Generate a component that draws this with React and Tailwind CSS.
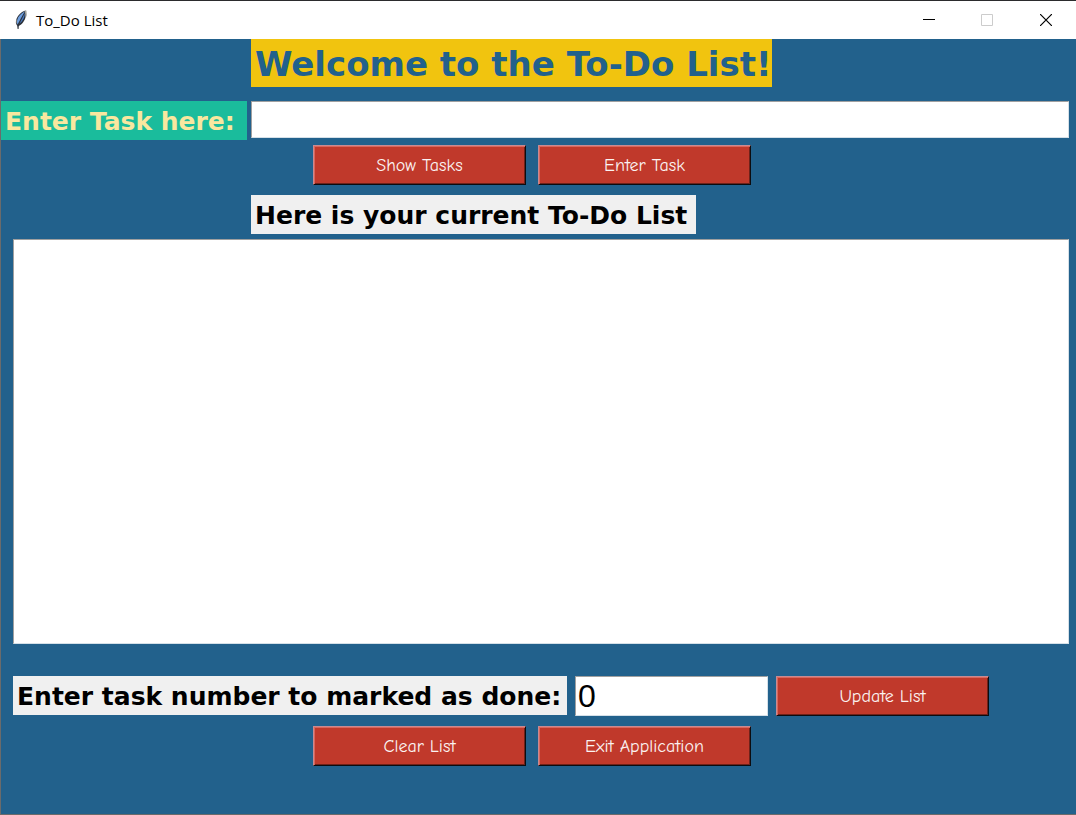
import { useState } from "react";

function FeatherIcon() {
  return (
    <svg width="14" height="20" viewBox="0 0 14 20" aria-hidden="true">
      <path d="M11.6 0.6 C7.5 1.6 3.4 5.6 2.2 10 C1.7 12.2 2 14.4 3.2 15.8 L3.6 19 L4.6 19 L4.8 16 C8 14.4 11 10.6 11.8 6.2 C12.2 4 12.2 2 11.6 0.6 Z" fill="#2b313b" />
      <path d="M10.8 1.6 C7.2 3 4.2 6.4 3.2 10 C2.8 11.8 2.9 13.2 3.6 14.6 L7.6 7 Z" fill="#6d9ddd" />
      <path d="M10.8 3 C11 7 9 11 5.4 13.8 L8.4 8 Z" fill="#4a7cc4" />
      <path d="M10.6 1 L12.4 .6 L12.8 5 L11.6 8.6 L11.2 4 Z" fill="#a3a29c" />
      <path d="M2 9.6 L2.8 9.4 L2.6 13.6 L1.8 13 Z" fill="#8c8a86" />
    </svg>
  );
}

function TitleBar() {
  return (
    <header className="flex h-[39px] items-center justify-between border-t border-[#2b2b2d] bg-white pl-[14px] text-black">
      <div className="flex items-center gap-2">
        <FeatherIcon />
        <span className="font-['Open_Sans','Noto_Sans',sans-serif] text-[15px] leading-5">To_Do List</span>
      </div>
      <div className="flex">
        <button type="button" aria-label="Minimize" className="flex h-[38px] w-[58px] items-center justify-center">
          <svg width="12" height="12" aria-hidden="true"><path d="M0 5.5H12" stroke="#000" /></svg>
        </button>
        <button type="button" aria-label="Maximize" disabled className="flex h-[38px] w-[58px] items-center justify-center">
          <svg width="12" height="12" aria-hidden="true"><path d="M.5 .5H11.5V11.5H.5Z" fill="none" stroke="#ccc" /></svg>
        </button>
        <button type="button" aria-label="Close" className="flex h-[38px] w-[60px] items-center justify-center">
          <svg width="12" height="12" aria-hidden="true"><path d="M0 0L12 12M12 0L0 12" stroke="#000" strokeWidth="1.2" /></svg>
        </button>
      </div>
    </header>
  );
}

function ActionButton({ children, onClick }) {
  return (
    <button
      type="button"
      onClick={onClick}
      className="h-10 w-[213px] shrink-0 border border-t-[#c98a92] border-r-[#0c0c10] border-b-[#0c0c10] border-l-[#c98a92] bg-[#c0392b] pt-px font-['Comic_Sans_MS','Comic_Neue','Open_Sans',sans-serif] text-[18px] leading-6 text-[#fbf3f2] shadow-[inset_1px_1px_0_#d9675c,inset_-1px_-1px_0_#6e221a]"
    >
      {children}
    </button>
  );
}

const field = "border border-t-[#a0a0a0] border-l-[#a0a0a0] border-r-[#d5e0e8] border-b-[#d5e0e8] bg-white text-black outline-none";
const caption = "h-[39px] shrink-0 px-1 text-[25px] leading-[42px] font-bold whitespace-nowrap";

export default function App() {
  const [task, setTask] = useState("");
  const [tasks, setTasks] = useState([]);
  const [list, setList] = useState("");
  const [number, setNumber] = useState("0");

  const show = (items) => setList(items.map((item, i) => `${i + 1}. ${item}`).join("\n"));
  const enter = () => {
    if (!task.trim()) return;
    setTasks([...tasks, task.trim()]);
    setTask("");
  };
  const update = () => {
    const rest = tasks.filter((_, i) => i + 1 !== Number(number));
    setTasks(rest);
    show(rest);
  };
  const clear = () => {
    setTasks([]);
    setList("");
  };

  return (
    <div className="flex min-h-screen flex-col font-['DejaVu_Sans',Verdana,sans-serif]">
      <TitleBar />
      <main className="flex flex-1 flex-col border-b border-l border-[#6b6b6b] bg-[#22618c] pr-[7px] pb-12">
        <h1 className="ml-[250px] h-12 w-[521px] bg-[#f1c40f] px-1 text-[34px] leading-[50px] font-bold whitespace-nowrap text-[#22618c]">
          Welcome to the To-Do List!
        </h1>
        <div className="mt-[14px] flex items-start gap-1">
          <label htmlFor="task" className={`${caption} w-[246px] bg-[#1abc9c] text-[#f9e79f]`}>Enter Task here:</label>
          <input id="task" value={task} onChange={(e) => setTask(e.target.value)} className={`${field} h-[37px] min-w-0 flex-1 px-1 text-[25px]`} />
        </div>
        <div className="mt-[5px] ml-[312px] flex gap-3">
          <ActionButton onClick={() => show(tasks)}>Show Tasks</ActionButton>
          <ActionButton onClick={enter}>Enter Task</ActionButton>
        </div>
        <label htmlFor="list" className={`${caption} mt-[10px] ml-[250px] w-[445px] bg-[#f0f0f0] text-black`}>
          Here is your current To-Do List
        </label>
        <textarea id="list" readOnly value={list} className={`${field} mt-[5px] ml-3 min-h-[200px] flex-1 resize-none px-1 text-[25px]`} />
        <div className="mt-8 ml-3 flex items-start gap-2">
          <label htmlFor="number" className={`${caption} w-[554px] bg-[#f0f0f0] text-black`}>
            Enter task number to marked as done:
          </label>
          <input
            id="number"
            value={number}
            onChange={(e) => setNumber(e.target.value)}
            className={`${field} h-10 w-[193px] px-[2px] font-['Liberation_Sans',Arial,sans-serif] text-[32px]`}
          />
          <ActionButton onClick={update}>Update List</ActionButton>
        </div>
        <div className="mt-[10px] ml-[312px] flex gap-3">
          <ActionButton onClick={clear}>Clear List</ActionButton>
          <ActionButton onClick={() => window.close()}>Exit Application</ActionButton>
        </div>
      </main>
    </div>
  );
}
